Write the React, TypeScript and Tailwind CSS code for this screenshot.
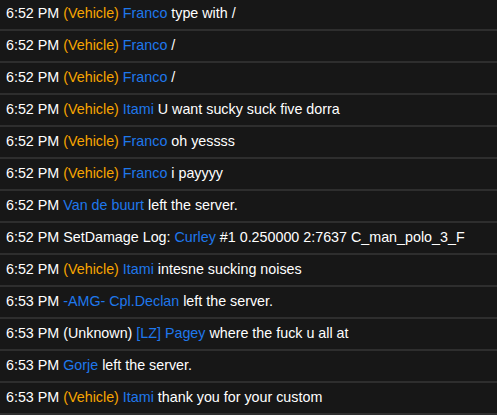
type Part = { t: string; c?: "o" | "b" };

const rows: { time: string; parts: Part[] }[] = [
  { time: "6:52 PM", parts: [{ t: "(Vehicle)", c: "o" }, { t: "Franco", c: "b" }, { t: "type with /" }] },
  { time: "6:52 PM", parts: [{ t: "(Vehicle)", c: "o" }, { t: "Franco", c: "b" }, { t: "/" }] },
  { time: "6:52 PM", parts: [{ t: "(Vehicle)", c: "o" }, { t: "Franco", c: "b" }, { t: "/" }] },
  { time: "6:52 PM", parts: [{ t: "(Vehicle)", c: "o" }, { t: "Itami", c: "b" }, { t: "U want sucky suck five dorra" }] },
  { time: "6:52 PM", parts: [{ t: "(Vehicle)", c: "o" }, { t: "Franco", c: "b" }, { t: "oh yessss" }] },
  { time: "6:52 PM", parts: [{ t: "(Vehicle)", c: "o" }, { t: "Franco", c: "b" }, { t: "i payyyy" }] },
  { time: "6:52 PM", parts: [{ t: "Van de buurt", c: "b" }, { t: "left the server." }] },
  { time: "6:52 PM", parts: [{ t: "SetDamage Log:" }, { t: "Curley", c: "b" }, { t: "#1 0.250000 2:7637 C_man_polo_3_F" }] },
  { time: "6:52 PM", parts: [{ t: "(Vehicle)", c: "o" }, { t: "Itami", c: "b" }, { t: "intesne sucking noises" }] },
  { time: "6:53 PM", parts: [{ t: "-AMG- Cpl.Declan", c: "b" }, { t: "left the server." }] },
  { time: "6:53 PM", parts: [{ t: "(Unknown)" }, { t: "[LZ] Pagey", c: "b" }, { t: "where the fuck u all at" }] },
  { time: "6:53 PM", parts: [{ t: "Gorje", c: "b" }, { t: "left the server." }] },
  { time: "6:53 PM", parts: [{ t: "(Vehicle)", c: "o" }, { t: "Itami", c: "b" }, { t: "thank you for your custom" }] },
];

function Row({ time, parts }: { time: string; parts: Part[] }) {
  return (
    <div className="flex h-[32px] items-center border-b-2 border-[#2e2e2e] pl-[6px] text-[14.3px] whitespace-pre text-white">
      <span>{time}</span>
      {parts.map((p, i) => (
        <span
          key={i}
          className={p.c === "o" ? "text-[#f7a500]" : p.c === "b" ? "text-[#1f78ec]" : ""}
        >
          {" " + p.t}
        </span>
      ))}
    </div>
  );
}

export default function App() {
  return (
    <div className="h-[415px] w-[497px] overflow-hidden bg-[#171717] font-['Liberation_Sans',Arial,sans-serif]">
      <div className="-mt-[1px]">
        {rows.map((r, i) => (
          <Row key={i} {...r} />
        ))}
      </div>
    </div>
  );
}
